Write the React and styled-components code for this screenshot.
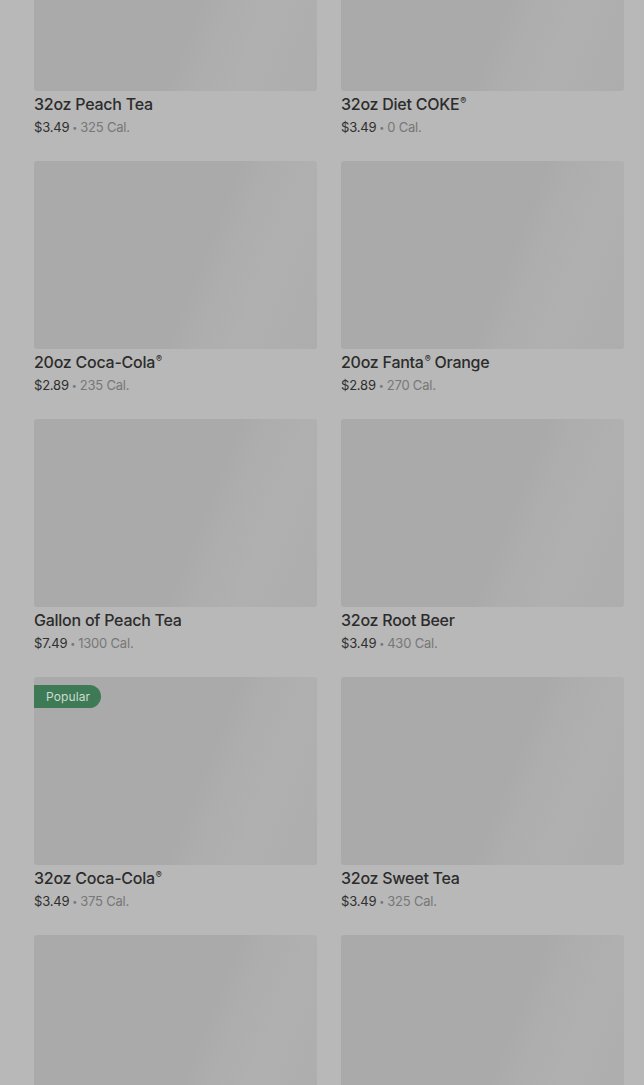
import React from "react";
import styled, { createGlobalStyle } from "styled-components";

const Global = createGlobalStyle`
  html, body { margin: 0; padding: 0; background: #b8b8b8; overflow: hidden; }
  body { font-family: Inter, "Noto Sans", "Liberation Sans", sans-serif; }
`;

const Page = styled.div`
  width: 644px;
  height: 1085px;
  overflow: hidden;
  background: #b8b8b8;
`;

const Grid = styled.div`
  display: grid;
  grid-template-columns: 283px 283px;
  column-gap: 24px;
  row-gap: 24px;
  padding: 0 20px 0 34px;
  margin-top: -97px;
`;

const Card = styled.div`
  display: flex;
  flex-direction: column;
`;

const Thumb = styled.div`
  position: relative;
  height: 188px;
  border-radius: 3px;
  background: linear-gradient(
    112deg,
    #aaaaaa 0%,
    #aaaaaa 58%,
    #adadad 64%,
    #b0b0b0 78%,
    #adadad 100%
  );
  margin-bottom: 3px;
`;

const Badge = styled.span`
  position: absolute;
  top: 8px;
  left: 0;
  height: 23px;
  display: flex;
  align-items: center;
  padding: 0 11px 0 12px;
  border-radius: 0 12px 12px 0;
  background: #3f7a57;
  color: #cddbd2;
  font-size: 12px;
  letter-spacing: 0.1px;
  line-height: 1;
`;

const Title = styled.div`
  height: 20px;
  font-size: 16px;
  line-height: 20px;
  font-weight: 500;
  letter-spacing: -0.25px;
  color: #2c2c2c;
  white-space: nowrap;
`;

const Reg = styled.sup`
  font-size: 9px;
  line-height: 0;
  vertical-align: 6px;
  margin-left: 1px;
`;

const Meta = styled.div`
  height: 20px;
  margin-top: 3px;
  font-size: 13px;
  line-height: 20px;
  letter-spacing: -0.2px;
  color: #777777;
  white-space: nowrap;
`;

const Price = styled.span`
  color: #2f2f2f;
`;

const Dot = styled.span`
  margin: 0 3px 0 3px;
  font-size: 9px;
  line-height: 0;
  vertical-align: 1px;
`;

const items = [
  { name: "32oz Peach Tea", price: "$3.49", cal: "325 Cal." },
  { name: "32oz Diet COKE", reg: true, price: "$3.49", cal: "0 Cal." },
  { name: "20oz Coca-Cola", reg: true, price: "$2.89", cal: "235 Cal." },
  { name: "20oz Fanta", reg: true, rest: " Orange", price: "$2.89", cal: "270 Cal." },
  { name: "Gallon of Peach Tea", price: "$7.49", cal: "1300 Cal." },
  { name: "32oz Root Beer", price: "$3.49", cal: "430 Cal." },
  { name: "32oz Coca-Cola", reg: true, price: "$3.49", cal: "375 Cal.", popular: true },
  { name: "32oz Sweet Tea", price: "$3.49", cal: "325 Cal." },
  { name: "", price: "", cal: "" },
  { name: "", price: "", cal: "" },
];

export default function App() {
  return (
    <Page>
      <Global />
      <Grid>
        {items.map((it, i) => (
          <Card key={i}>
            <Thumb>{it.popular && <Badge>Popular</Badge>}</Thumb>
            {it.name && (
              <Title>
                {it.name}
                {it.reg && <Reg>®</Reg>}
                {it.rest}
              </Title>
            )}
            {it.price && (
              <Meta>
                <Price>{it.price}</Price>
                <Dot>•</Dot>
                {it.cal}
              </Meta>
            )}
          </Card>
        ))}
      </Grid>
    </Page>
  );
}
